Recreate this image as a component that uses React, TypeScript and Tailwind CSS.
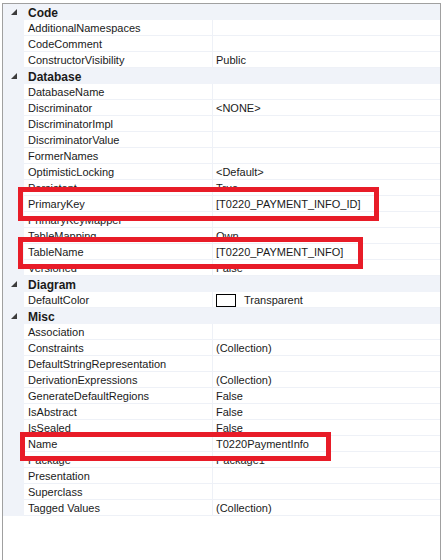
import React from 'react';

type Row = { label: string; value?: string; swatch?: boolean };
type Group = { name: string; rows: Row[] };

const groups: Group[] = [
    {
        name: 'Code',
        rows: [
            { label: 'AdditionalNamespaces' },
            { label: 'CodeComment' },
            { label: 'ConstructorVisibility', value: 'Public' }
        ]
    },
    {
        name: 'Database',
        rows: [
            { label: 'DatabaseName' },
            { label: 'Discriminator', value: '<NONE>' },
            { label: 'DiscriminatorImpl' },
            { label: 'DiscriminatorValue' },
            { label: 'FormerNames' },
            { label: 'OptimisticLocking', value: '<Default>' },
            { label: 'Persistent', value: 'True' },
            { label: 'PrimaryKey', value: '[T0220_PAYMENT_INFO_ID]' },
            { label: 'PrimaryKeyMapper' },
            { label: 'TableMapping', value: 'Own' },
            { label: 'TableName', value: '[T0220_PAYMENT_INFO]' },
            { label: 'Versioned', value: 'False' }
        ]
    },
    {
        name: 'Diagram',
        rows: [{ label: 'DefaultColor', value: 'Transparent', swatch: true }]
    },
    {
        name: 'Misc',
        rows: [
            { label: 'Association' },
            { label: 'Constraints', value: '(Collection)' },
            { label: 'DefaultStringRepresentation' },
            { label: 'DerivationExpressions', value: '(Collection)' },
            { label: 'GenerateDefaultRegions', value: 'False' },
            { label: 'IsAbstract', value: 'False' },
            { label: 'IsSealed', value: 'False' },
            { label: 'Name', value: 'T0220PaymentInfo' },
            { label: 'Package', value: 'Package1' },
            { label: 'Presentation' },
            { label: 'Superclass' },
            { label: 'Tagged Values', value: '(Collection)' }
        ]
    }
];

const Expander = () => (
    <svg width="7" height="7" viewBox="0 0 7 7" className="block">
        <polygon points="6,0 6,6 0,6" fill="#3c3c3c" />
    </svg>
);

const App: React.FC = () => {
    return (
        <div
            className="relative w-[441px] h-[560px] bg-white text-[11px] text-[#1a1a1a] overflow-hidden"
            style={{ fontFamily: '"Liberation Sans", Arial, sans-serif' }}
        >
            <div className="absolute left-[2px] top-[3px] w-[439px] h-[557px] border-l border-t border-r border-[#a0a0a0]">
                {groups.map((group) => (
                    <div key={group.name}>
                        {/* Category header */}
                        <div className="flex h-[16px] items-center bg-[#f0f3f9]">
                            <div className="w-[21px] flex justify-center pl-[1px] pt-[1px]">
                                <Expander />
                            </div>
                            <span className="pl-[4px] pt-[2px] font-bold text-[12px] leading-[14px]">{group.name}</span>
                        </div>

                        {group.rows.map((row) => (
                            <div key={row.label} className="flex h-[16px]">
                                <div className="w-[21px] shrink-0 bg-[#f0f3f9]" />
                                <div className="w-[188px] shrink-0 border-b border-[#eef1f7] pl-[4px] pt-[1px] leading-[14px] whitespace-nowrap overflow-hidden">
                                    {row.label}
                                </div>
                                <div className="flex-1 border-b border-l border-[#eef1f7] pl-[3px] pt-[1px] leading-[14px] whitespace-nowrap flex items-center">
                                    {row.swatch && (
                                        <span className="inline-block w-[20px] h-[13px] border border-black bg-white mr-[8px]" />
                                    )}
                                    {row.value}
                                </div>
                            </div>
                        ))}
                    </div>
                ))}
            </div>

            {/* Red highlight boxes */}
            <div className="absolute left-[18px] top-[187px] w-[361px] h-[34px] border-[5px] border-[#e81c28]" />
            <div className="absolute left-[18px] top-[237px] w-[345px] h-[32px] border-[5px] border-[#e81c28]" />
            <div className="absolute left-[20px] top-[432px] w-[311px] h-[29px] border-[5px] border-[#e81c28]" />
        </div>
    );
};

export default App;
